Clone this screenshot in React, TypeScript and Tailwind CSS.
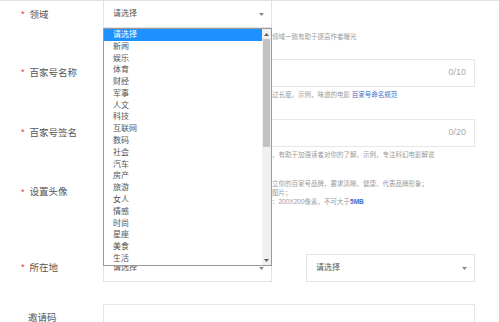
const font = { fontFamily: '"Liberation Sans", "Noto Sans CJK SC", sans-serif' };

const categories = [
  "请选择", "新闻", "娱乐", "体育", "财经", "军事", "人文", "科技", "互联网", "数码",
  "社会", "汽车", "房产", "旅游", "女人", "情感", "时尚", "星座", "美食", "生活",
];

function Label({ text, required = true }: { text: string; required?: boolean }) {
  return (
    <div className="flex w-[103px] shrink-0 items-center text-[9.5px] text-[#555]">
      {required ? (
        <>
          <span className="ml-[21px] mr-[5px] text-[9px] text-[#e4393c]">*</span>
          <span>{text}</span>
        </>
      ) : (
        <span className="ml-[28px]">{text}</span>
      )}
    </div>
  );
}

function Caret() {
  return (
    <svg width="5" height="3" viewBox="0 0 5 3" className="shrink-0">
      <path d="M0 0h5L2.5 3z" fill="#888" />
    </svg>
  );
}

function SelectBox({ className = "" }: { className?: string }) {
  return (
    <div
      className={`flex h-[28px] w-[169px] items-center justify-between border border-[#e3e3e3] bg-white pl-[9px] pr-[7px] text-[8px] text-[#555] ${className}`}
    >
      <span>请选择</span>
      <Caret />
    </div>
  );
}

function Help({ children, className = "" }: { children: React.ReactNode; className?: string }) {
  return <div className={`pl-[169px] text-[6.5px] leading-[9px] text-[#9a9a9a] ${className}`}>{children}</div>;
}

function CountInput({ count }: { count: string }) {
  return (
    <div className="flex h-[28px] w-[372px] items-center justify-end border border-[#e6e6e6] pr-[8px] text-[9px] text-[#aaa]">
      {count}
    </div>
  );
}

function Dropdown() {
  return (
    <div className="absolute left-[103px] top-[27px] flex h-[238px] w-[169px] border border-[#9a9a9a] bg-white">
      <ul className="flex-1">
        {categories.map((c, i) => (
          <li
            key={c}
            className={`flex h-[11.8px] items-center pl-[9px] text-[8px] ${
              i === 0 ? "bg-[#1e90ff] text-white" : "text-[#555]"
            }`}
          >
            {c}
          </li>
        ))}
      </ul>
      {/* scrollbar */}
      <div className="flex w-[9px] flex-col bg-[#f0f0f0]">
        <div className="flex h-[10px] items-center justify-center">
          <svg width="5" height="3" viewBox="0 0 5 3">
            <path d="M0 3h5L2.5 0z" fill="#606060" />
          </svg>
        </div>
        <div className="mx-[1px] h-[108px] bg-[#c2c2c2]" />
        <div className="flex-1" />
        <div className="flex h-[10px] items-center justify-center">
          <svg width="5" height="3" viewBox="0 0 5 3">
            <path d="M0 0h5L2.5 3z" fill="#606060" />
          </svg>
        </div>
      </div>
    </div>
  );
}

export default function App() {
  return (
    <div className="relative h-[322px] w-[499px] overflow-hidden border-t border-[#e2e2e2] bg-white" style={font}>
      {/* 领域 */}
      <div className="flex h-[28px]">
        <Label text="领域" />
        <SelectBox className="-mt-px" />
      </div>
      <div className="ml-[103px] mt-[3px]">
        <Help>领域一致有助于提高作者曝光</Help>
      </div>

      {/* 百家号名称 */}
      <div className="mt-[18px] flex">
        <Label text="百家号名称" />
        <CountInput count="0/10" />
      </div>
      <div className="ml-[103px] mt-[3px]">
        <Help>
          过长度。示例，味道的电影 <a className="text-[#3a6cc6]">百家号命名规范</a>
        </Help>
      </div>

      {/* 百家号签名 */}
      <div className="mt-[20px] flex">
        <Label text="百家号签名" />
        <CountInput count="0/20" />
      </div>
      <div className="ml-[103px] mt-[3px]">
        <Help>，有助于加强读者对你的了解。示例，专注科幻电影解说</Help>
      </div>

      {/* 设置头像 */}
      <div className="mt-[20px] flex">
        <Label text="设置头像" />
        <div>
          <Help>立你的百家号品牌，要求清晰、健康、代表品牌形象；</Help>
          <Help>图片；</Help>
          <Help>
            ：200X200像素，不可大于<b className="text-[#3a6cc6]">5MB</b>
          </Help>
        </div>
      </div>

      {/* 所在地 */}
      <div className="mt-[48px] flex">
        <Label text="所在地" />
        <div className="flex gap-[34px]">
          <SelectBox />
          <SelectBox />
        </div>
      </div>

      {/* 邀请码 */}
      <div className="mt-[22px] flex">
        <Label text="邀请码" required={false} />
        <div className="h-[28px] w-[372px] border border-[#e6e6e6]" />
      </div>

      <Dropdown />
    </div>
  );
}
